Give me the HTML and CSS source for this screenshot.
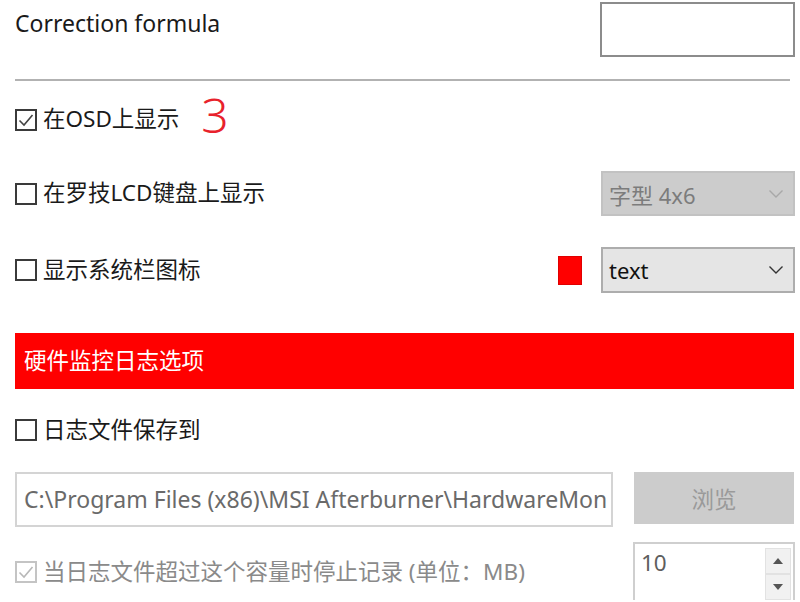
FILE: index.html
```html
<!DOCTYPE html>
<html lang="zh-CN">
<head>
<meta charset="utf-8">
<title>Settings</title>
<link rel="stylesheet" href="styles.css">
</head>
<body>
<div class="panel">
  <div class="row row-top">
    <span class="label label-top">Correction formula</span>
    <div class="formula-box"></div>
  </div>
  <div class="divider"></div>

  <div class="row row-osd">
    <span class="cb checked"><svg viewBox="0 0 22 22" width="22" height="22"><path d="M4.5 11.5 L9 16 L17.5 6" fill="none" stroke="#444" stroke-width="1.6"/></svg></span>
    <span class="label">在OSD上显示</span>
    <span class="step">3</span>
  </div>

  <div class="row row-lcd">
    <span class="cb"></span>
    <span class="label">在罗技LCD键盘上显示</span>
    <div class="grow"></div>
    <div class="select disabled">
      <span>字型 4x6</span>
      <svg class="chev" viewBox="0 0 16 10" width="16" height="10"><path d="M1.5 1.5 L8 8 L14.5 1.5" fill="none" stroke="#a8a8a8" stroke-width="1.4"/></svg>
    </div>
  </div>

  <div class="row row-tray">
    <span class="cb"></span>
    <span class="label">显示系统栏图标</span>
    <div class="grow"></div>
    <span class="swatch"></span>
    <div class="select">
      <span>text</span>
      <svg class="chev" viewBox="0 0 16 10" width="16" height="10"><path d="M1.5 1.5 L8 8 L14.5 1.5" fill="none" stroke="#333" stroke-width="1.4"/></svg>
    </div>
  </div>

  <div class="section-bar">硬件监控日志选项</div>

  <div class="row row-log">
    <span class="cb"></span>
    <span class="label">日志文件保存到</span>
  </div>

  <div class="row row-path">
    <div class="path-input">C:\Program Files (x86)\MSI Afterburner\HardwareMon</div>
    <div class="btn-browse">浏览</div>
  </div>

  <div class="row row-limit">
    <span class="cb checked disabled-cb"><svg viewBox="0 0 22 22" width="22" height="22"><path d="M4.5 11.5 L9 16 L17.5 6" fill="none" stroke="#b8b8b8" stroke-width="1.6"/></svg></span>
    <span class="label label-disabled">当日志文件超过这个容量时停止记录 (单位：MB)</span>
    <div class="grow"></div>
    <div class="spin">
      <span class="spin-value">10</span>
      <div class="spin-btns">
        <div class="spin-btn"><svg viewBox="0 0 10 6" width="10" height="6"><path d="M0 6 L5 0 L10 6 Z" fill="#555"/></svg></div>
        <div class="spin-btn"><svg viewBox="0 0 10 6" width="10" height="6"><path d="M0 0 L5 6 L10 0 Z" fill="#555"/></svg></div>
      </div>
    </div>
  </div>
</div>
</body>
</html>
```

FILE: styles.css
```css
html, body {
  margin: 0;
  padding: 0;
  background: #ffffff;
  overflow: hidden;
}

body {
  font-family: "Noto Sans", "Noto Sans CJK SC", sans-serif;
  font-size: 22.5px;
  color: #1a1a1a;
}

.panel {
  width: 780px;
  padding-left: 15px;
  display: flex;
  flex-direction: column;
}

.row {
  display: flex;
  align-items: center;
}

.grow {
  flex: 1;
}

.label {
  margin-left: 6px;
  line-height: 1;
  white-space: nowrap;
}

.row-top {
  height: 57px;
  align-items: flex-start;
  justify-content: space-between;
}

.label-top {
  margin-left: 0;
  margin-top: 12px;
  font-size: 23px;
}

.formula-box {
  box-sizing: border-box;
  width: 195px;
  height: 55px;
  margin-top: 2px;
  border: 2px solid #8c8c8c;
}

.divider {
  width: 775px;
  height: 2px;
  margin-top: 22px;
  background: #b2b2b2;
}

.row-osd {
  height: 47px;
  margin-top: 15px;
}

.step {
  margin-left: 22px;
  font-size: 48px;
  line-height: 1;
  color: #e8222c;
  font-weight: 300;
  position: relative;
  top: -5px;
}

.row-lcd {
  height: 45px;
  margin-top: 28px;
}

.row-tray {
  height: 46px;
  margin-top: 31px;
}

.cb {
  box-sizing: border-box;
  width: 22px;
  height: 22px;
  border: 2px solid #3a3a3a;
  flex: none;
  position: relative;
}

.cb svg {
  position: absolute;
  left: -2px;
  top: -2px;
}

.disabled-cb {
  border-color: #c4c4c4;
}

.select {
  box-sizing: border-box;
  width: 194px;
  height: 100%;
  background: #e5e5e5;
  border: 2px solid #adadad;
  display: flex;
  align-items: center;
  justify-content: space-between;
  padding: 0 9px 0 6px;
  font-size: 22px;
  color: #111;
}

.select.disabled {
  background: #cccccc;
  border-color: #c2c2c2;
  color: #7c7c7c;
}

.swatch {
  width: 24px;
  height: 29px;
  background: #ff0000;
  box-shadow: inset 0 0 0 1px #e00000;
  margin-right: 19px;
  flex: none;
}

.section-bar {
  box-sizing: border-box;
  width: 779px;
  height: 56px;
  margin-top: 40px;
  background: #ff0000;
  color: #ffffff;
  padding-left: 9px;
  display: flex;
  align-items: center;
  line-height: 1;
}

.row-log {
  height: 40px;
  margin-top: 21px;
}

.row-path {
  height: 55px;
  margin-top: 22px;
  align-items: stretch;
}

.path-input {
  box-sizing: border-box;
  width: 598px;
  height: 55px;
  border: 2px solid #d4d4d4;
  padding-left: 7px;
  font-size: 23px;
  color: #6a6a6a;
  white-space: nowrap;
  overflow: hidden;
  display: flex;
  align-items: center;
  line-height: 1;
}

.btn-browse {
  width: 160px;
  height: 52px;
  margin-left: 21px;
  background: #cccccc;
  color: #9a9a9a;
  display: flex;
  align-items: center;
  justify-content: center;
}

.row-limit {
  height: 60px;
  margin-top: 15px;
}

.label-disabled {
  color: #8a8a8a;
}

.spin {
  box-sizing: border-box;
  width: 162px;
  height: 58px;
  border: 2px solid #cfcfcf;
  border-bottom: none;
  display: flex;
  justify-content: space-between;
  padding: 4px 2px 0 6px;
  align-self: flex-start;
}

.spin-value {
  color: #5e5e5e;
  line-height: 1;
  margin-top: 4px;
}

.spin-btns {
  width: 26px;
  display: flex;
  flex-direction: column;
}

.spin-btn {
  height: 24px;
  background: #f1f1f1;
  border: 1px solid #e2e2e2;
  display: flex;
  align-items: center;
  justify-content: center;
}
```
